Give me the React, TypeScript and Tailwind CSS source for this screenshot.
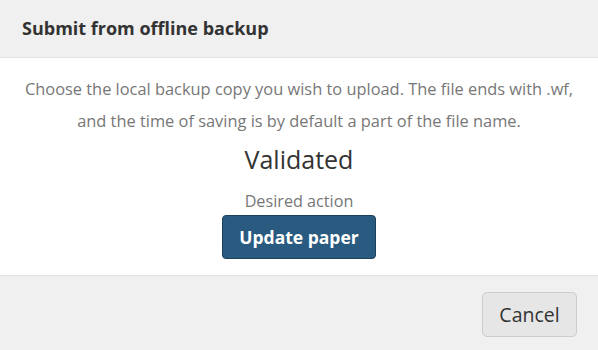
import React from 'react';

export default function App() {
  return (
    <div className="w-[598px] h-[350px] bg-white flex flex-col overflow-hidden" style={{ fontFamily: '"Open Sans", "Liberation Sans", sans-serif' }}>
      <div className="h-[58px] shrink-0 bg-[#f0f0f0] border-b border-[#e3e3e3] px-[22px] flex items-center">
        <h1 className="text-[18px] font-bold text-[#333]">Submit from offline backup</h1>
      </div>

      <div className="h-[217px] shrink-0 flex flex-col items-center pt-[15px] text-center">
        <p className="text-[16.4px] leading-[32px] text-[#777]">
          Choose the local backup copy you wish to upload. The file ends with .wf,
          <br />
          and the time of saving is by default a part of the file name.
        </p>
        <div className="mt-[6px] text-[25px] leading-[32px] text-[#333]">Validated</div>
        <div className="mt-[14px] text-[16.2px] leading-[24px] text-[#777]">Desired action</div>
        <button className="mt-[2px] w-[154px] h-[44px] rounded-[4px] bg-[#295b80] border border-[#1c3f5a] text-white text-[17.5px] font-bold">
          Update paper
        </button>
      </div>

      <div className="flex-1 bg-[#f0f0f0] border-t border-[#e3e3e3] flex justify-end items-start pt-[16px] pr-[21px]">
        <button className="w-[95px] h-[45px] rounded-[5px] bg-[#e6e6e6] border border-[#cccccc] text-[#333] text-[19.5px]">
          Cancel
        </button>
      </div>
    </div>
  );
}
